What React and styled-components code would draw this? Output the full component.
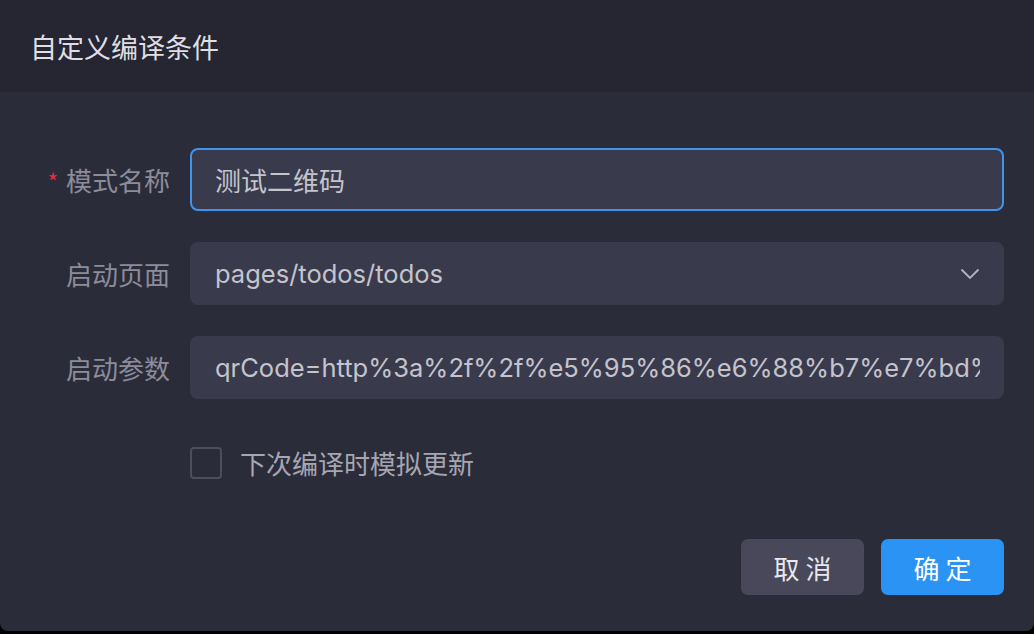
import React, { useState } from 'react';
import styled, { createGlobalStyle } from 'styled-components';

const GlobalStyle = createGlobalStyle`
  html, body {
    margin: 0;
    padding: 0;
    background: #000;
  }
  body {
    font-family: "Noto Sans CJK SC", "Inter", sans-serif;
  }
`;

// --- Dialog shell ---
const Dialog = styled.div`
  width: 1034px;
  height: 631px;
  background: #2b2c3a;
  border-radius: 0 0 8px 8px;
  overflow: hidden;
  display: flex;
  flex-direction: column;
`;

const Header = styled.div`
  height: 92px;
  background: #252631;
  display: flex;
  align-items: center;
  padding: 0 30px;
  box-sizing: border-box;
`;

const Title = styled.h1`
  margin: 0;
  font-size: 27px;
  font-weight: 400;
  color: #dedee4;
`;

const Body = styled.div`
  flex: 1;
  padding: 56px 30px 0 30px;
  display: flex;
  flex-direction: column;
`;

// --- Form rows ---
const Row = styled.div`
  display: flex;
  align-items: center;
  gap: 20px;
  margin-bottom: 31px;
`;

const Label = styled.label`
  width: 140px;
  text-align: right;
  font-size: 26px;
  color: #8c8c9a;
  flex-shrink: 0;
  white-space: nowrap;
`;

const Star = styled.span`
  color: #e0323c;
  font-size: 22px;
  margin-right: 8px;
  position: relative;
  top: -1px;
`;

const Field = styled.div`
  flex: 1;
  height: 63px;
  box-sizing: border-box;
  border-radius: 8px;
  background: #3a3a4d;
  border: 2px solid ${p => (p.$focused ? '#3d96ee' : 'transparent')};
  display: flex;
  align-items: center;
  padding: 0 22px 0 23px;
  overflow: hidden;
`;

const Value = styled.span`
  flex: 1;
  font-family: ${p => (p.$latin ? '"Inter", "Noto Sans CJK SC", sans-serif' : '"Noto Sans CJK SC", sans-serif')};
  font-size: ${p => (p.$latin ? '25.5px' : '26px')};
  color: #c4c4cc;
  white-space: nowrap;
  overflow: hidden;
`;

const Check = styled.div`
  display: flex;
  align-items: center;
  gap: 18px;
  margin-left: 160px;
  margin-top: 14px;
`;

const Box = styled.span`
  width: 28px;
  height: 28px;
  border: 2px solid #4c4d5e;
  border-radius: 4px;
`;

const CheckText = styled.span`
  font-size: 26px;
  color: #a6a6b2;
`;

const Footer = styled.div`
  display: flex;
  justify-content: flex-end;
  gap: 17px;
  margin-top: auto;
  margin-bottom: 36px;
`;

const Button = styled.button`
  width: 123px;
  height: 56px;
  border: none;
  border-radius: 7px;
  font-family: "Noto Sans CJK SC", sans-serif;
  font-size: 26px;
  letter-spacing: 6px;
  padding: 0 0 0 6px;
  color: ${p => (p.$primary ? '#ffffff' : '#e8e8ee')};
  background: ${p => (p.$primary ? '#2b93f4' : '#48485a')};
  cursor: pointer;
`;

const Chevron = () => (
  <svg width="20" height="12" viewBox="0 0 20 12" fill="none">
    <path d="M1.5 1.5 L10 10 L18.5 1.5" stroke="#b4b4c0" strokeWidth="1.8" />
  </svg>
);

export default function App() {
  const [update, setUpdate] = useState(false);

  return (
    <>
      <GlobalStyle />
      <Dialog>
        <Header>
          <Title>自定义编译条件</Title>
        </Header>
        <Body>
          <Row>
            <Label><Star>*</Star>模式名称</Label>
            <Field $focused>
              <Value>测试二维码</Value>
            </Field>
          </Row>
          <Row>
            <Label>启动页面</Label>
            <Field>
              <Value $latin>pages/todos/todos</Value>
              <Chevron />
            </Field>
          </Row>
          <Row>
            <Label>启动参数</Label>
            <Field>
              <Value $latin>qrCode=http%3a%2f%2f%e5%95%86%e6%88%b7%e7%bd%9</Value>
            </Field>
          </Row>
          <Check onClick={() => setUpdate(v => !v)}>
            <Box />
            <CheckText>下次编译时模拟更新</CheckText>
          </Check>
          <Footer>
            <Button>取消</Button>
            <Button $primary>确定</Button>
          </Footer>
        </Body>
      </Dialog>
    </>
  );
}
